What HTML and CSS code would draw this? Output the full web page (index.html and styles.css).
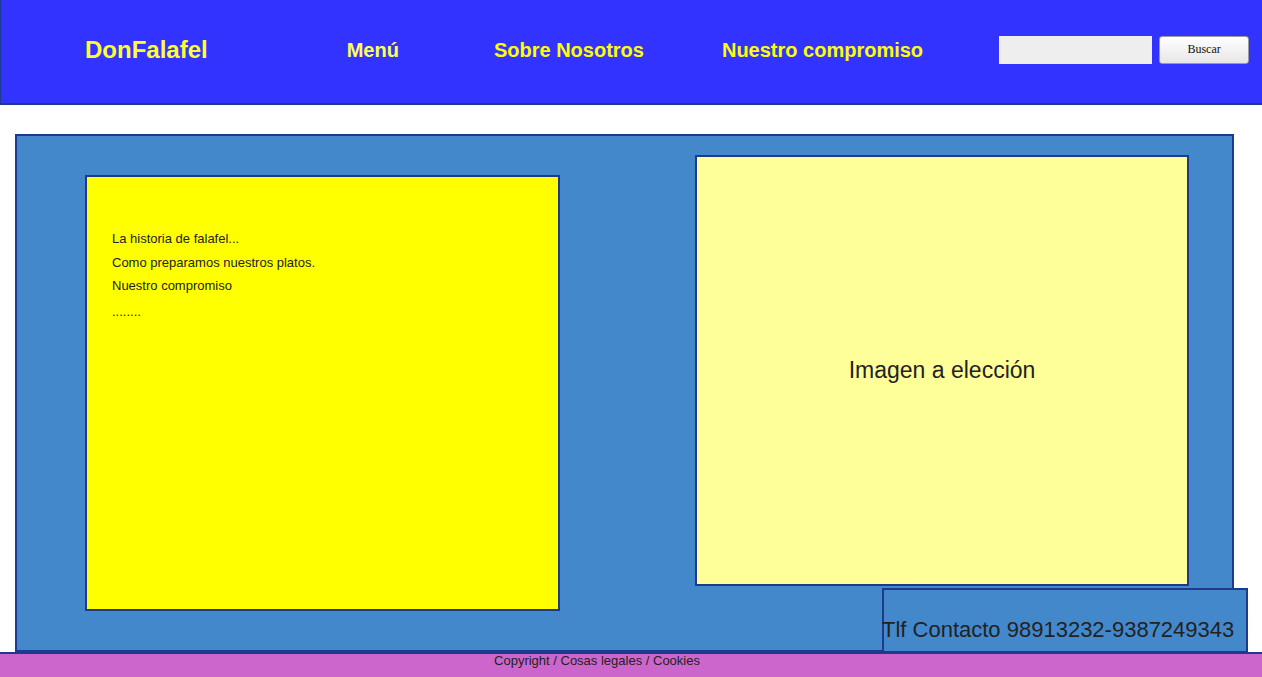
FILE: index.html
```html
<!DOCTYPE html>
<html lang="es">
<head>
<meta charset="utf-8">
<title>DonFalafel</title>
<link rel="stylesheet" href="styles.css">
</head>
<body>
<header class="topbar">
  <div class="brand">DonFalafel</div>
  <nav class="nav">
    <a class="nav-link nav-menu" href="#">Menú</a>
    <a class="nav-link nav-sobre" href="#">Sobre Nosotros</a>
    <a class="nav-link nav-comp" href="#">Nuestro compromiso</a>
  </nav>
  <form class="search">
    <input class="search-input" type="text">
    <button class="search-btn" type="button">Buscar</button>
  </form>
</header>
<main class="content">
  <section class="story">
    <p>La historia de falafel...</p>
    <p>Como preparamos nuestros platos.</p>
    <p>Nuestro compromiso</p>
    <p class="dots">........</p>
  </section>
  <section class="picture">Imagen a elección</section>
  <div class="contact"><span class="contact-text">Tlf Contacto 98913232-9387249343</span></div>
</main>
<footer class="footer">Copyright / Cosas legales / Cookies</footer>
</body>
</html>
```

FILE: styles.css
```css
html, body {
  margin: 0;
  padding: 0;
}
body {
  font-family: "Liberation Sans", Arial, sans-serif;
  background: #ffffff;
  color: #222222;
  overflow: hidden;
}

.topbar {
  display: flex;
  align-items: center;
  box-sizing: border-box;
  height: 105px;
  padding-bottom: 4px;
  background: #3333ff;
  border-bottom: 2px solid #1d3a8c;
  border-left: 1px solid #1d3a8c;
}
.brand {
  margin-left: 84px;
  font-size: 24px;
  font-weight: bold;
  color: #ffff33;
  line-height: 28px;
}
.nav {
  display: flex;
  align-items: center;
  margin-left: 139px;
}
.nav-link {
  font-size: 20px;
  font-weight: bold;
  color: #ffff00;
  text-decoration: none;
  line-height: 24px;
}
.nav-menu { color: #ffff55; }
.nav-sobre { margin-left: 95px; }
.nav-comp { margin-left: 78px; }

.search {
  display: flex;
  align-items: center;
  margin: 0 0 0 76px;
}
.search-input {
  box-sizing: border-box;
  width: 153px;
  height: 28px;
  border: none;
  background: #eeeeee;
  padding: 0 4px;
  margin: 0;
}
.search-btn {
  box-sizing: border-box;
  width: 90px;
  height: 28px;
  margin: 0 0 0 7px;
  padding: 0;
  border: 1px solid #9a9a9a;
  border-radius: 3px;
  background: linear-gradient(#ffffff, #e6e6e6);
  font-family: "Liberation Serif", "Times New Roman", serif;
  font-size: 12px;
  color: #111111;
}

.content {
  position: relative;
  box-sizing: border-box;
  display: flex;
  align-items: flex-start;
  width: 1219px;
  height: 518px;
  margin: 29px 0 0 15px;
  background: #4488cc;
  border: 2px solid #1d3a8c;
}
.story {
  box-sizing: border-box;
  width: 475px;
  height: 436px;
  margin: 39px 0 0 68px;
  padding: 50px 25px 0;
  background: #ffff00;
  border: 2px solid #1d3a8c;
  font-size: 13px;
  line-height: 23.5px;
}
.story p {
  margin: 0;
}
.story .dots {
  margin-top: 2px;
}
.picture {
  box-sizing: border-box;
  display: flex;
  align-items: center;
  justify-content: center;
  width: 494px;
  height: 431px;
  margin: 19px 0 0 135px;
  background: #ffff99;
  border: 2px solid #1d3a8c;
  font-size: 23px;
}
.contact {
  position: absolute;
  right: -16px;
  bottom: -3px;
  box-sizing: border-box;
  width: 366px;
  height: 65px;
  padding-top: 27px;
  background: #4488cc;
  border: 2px solid #1d3a8c;
  font-size: 22px;
  white-space: nowrap;
}
.contact-text {
  margin-left: -2px;
}

.footer {
  box-sizing: border-box;
  height: 25px;
  background: #cc66cc;
  border-top: 2px solid #1d3a8c;
  font-size: 13px;
  line-height: 13px;
  text-align: center;
  padding-right: 68px;
}
```
